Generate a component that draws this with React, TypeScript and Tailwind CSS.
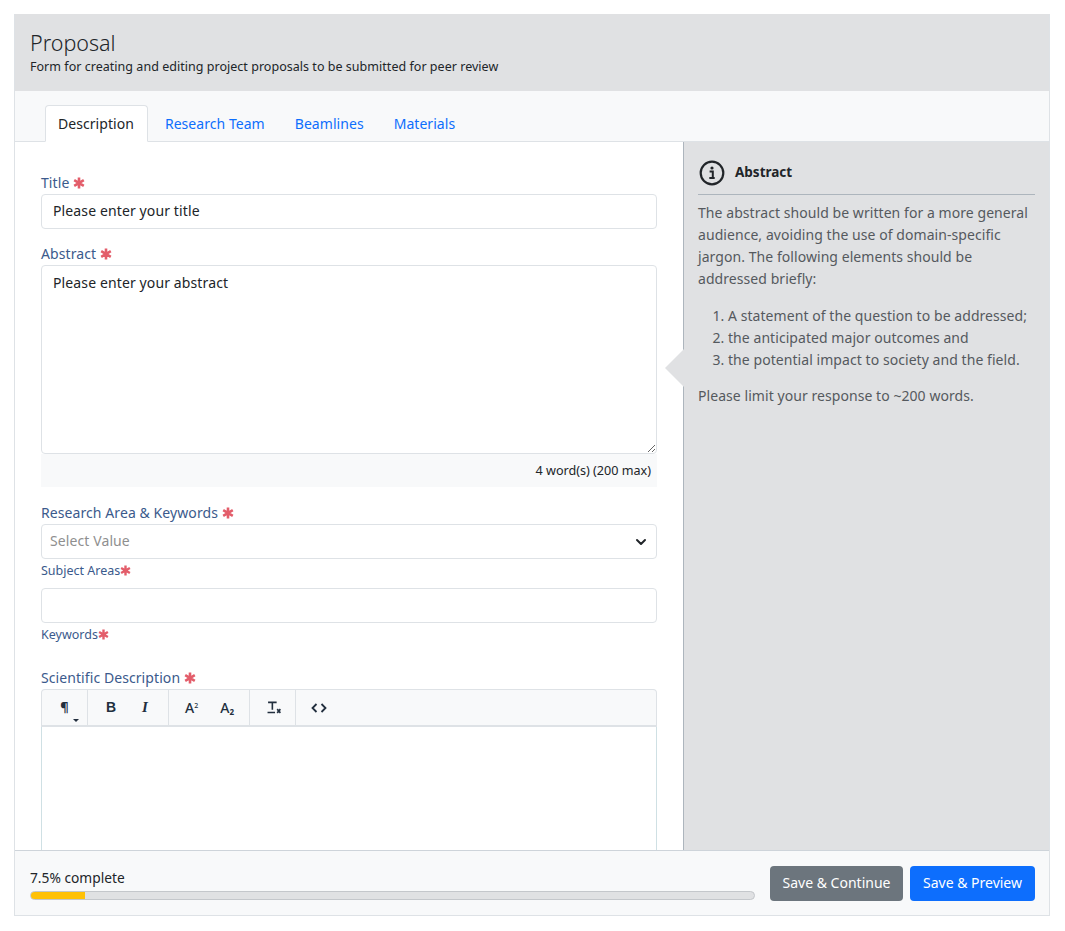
import { ChevronDown } from 'lucide-react';

const tabs = ['Research Team', 'Beamlines', 'Materials'];

function Star({ small }: { small?: boolean }) {
  return (
    <svg viewBox="0 0 12 12" className={small ? 'inline-block w-[11px] h-[11px] align-[-0.5px]' : 'inline-block w-[12px] h-[12px] ml-[4px] align-[-0.5px]'}>
      <path d="M6 0.5v11M1.2 3.2l9.6 5.6M10.8 3.2l-9.6 5.6" stroke="#e35d6a" strokeWidth="2.6" fill="none" />
    </svg>
  );
}

function FieldLabel({ text }: { text: string }) {
  return (
    <div className="text-[14px] leading-[21px] tracking-[0.08px] text-[#3b5a8c]">
      {text}
      <Star />
    </div>
  );
}

function SubLabel({ text }: { text: string }) {
  return (
    <div className="text-[12.5px] leading-[18px] text-[#3b5a8c] mt-[3px]">
      {text}
      <Star small />
    </div>
  );
}

function ToolbarButton({ children, w }: { children: React.ReactNode; w: string }) {
  return <div className={`flex items-center justify-center h-[35px] ${w}`}>{children}</div>;
}

export default function App() {
  return (
    <div className="h-[931px] pl-[14px] pr-[15px] py-[14px] bg-white text-[14px] text-[#212529] overflow-hidden font-['Noto_Sans',sans-serif]">
      <div className="h-[902px] flex flex-col border border-[#dee2e6] border-t-0 overflow-hidden">
        {/* Header */}
        <div className="h-[77px] shrink-0 bg-[#e0e1e3] px-[15px] pt-[14px]">
          <div className="text-[21.5px] leading-[29px] font-light text-[#212529]">Proposal</div>
          <div className="text-[12.5px] leading-[19px] tracking-[0.03px] text-[#212529]">
            Form for creating and editing project proposals to be submitted for peer review
          </div>
        </div>

        {/* Tabs */}
        <div className="h-[51px] shrink-0 bg-[#f8f9fa] border-b border-[#dee2e6] pl-[30px] pt-[14px] flex items-end">
          <div className="h-[37px] -mb-px mr-[2px] pl-[12px] pr-[13px] tracking-[0.05px] bg-white border border-[#dee2e6] border-b-white rounded-t-[4px] flex items-center">
            Description
          </div>
          {tabs.map((tab) => (
            <div key={tab} className="h-[36px] px-[15px] flex items-center tracking-[0.05px] text-[#0d6efd]">
              {tab}
            </div>
          ))}
        </div>

        {/* Body */}
        <div className="flex-1 min-h-0 flex">
          <div className="w-[668px] shrink-0 pl-[26px] pr-[26px] pt-[30px] overflow-hidden">
            <FieldLabel text="Title" />
            <div className="h-[35px] mt-[1px] pb-[2px] border border-[#dee2e6] rounded-[4px] px-[11px] tracking-[0.12px] flex items-center">
              Please enter your title
            </div>

            <div className="mt-[14px]">
              <FieldLabel text="Abstract" />
            </div>
            <textarea
              readOnly
              defaultValue="Please enter your abstract"
              className="block w-full h-[189px] mt-[1px] border border-[#dee2e6] rounded-[4px] px-[11px] py-[6px] leading-[21px] tracking-[0.12px] outline-none resize-y"
            />
            <div className="h-[33px] pt-[1px] bg-[#f8f9fa] flex items-center justify-end pr-[6px] text-[12.6px]">
              4 word(s) (200 max)
            </div>

            <div className="mt-[15px]">
              <FieldLabel text="Research Area & Keywords" />
            </div>
            <div className="h-[35px] mt-[1px] border border-[#dee2e6] rounded-[4px] pl-[8px] pr-[7px] flex items-center justify-between text-[#8f8f8f]">
              <span className="pb-[2px] tracking-[0.1px]">Select Value</span>
              <ChevronDown className="w-[16px] h-[16px] text-[#212529]" strokeWidth={3} />
            </div>
            <SubLabel text="Subject Areas" />

            <div className="h-[35px] mt-[8px] border border-[#dee2e6] rounded-[4px]" />
            <SubLabel text="Keywords" />

            <div className="mt-[23px]">
              <FieldLabel text="Scientific Description" />
            </div>
            <div className="mt-[1px] border border-[#dee2e6] rounded-t-[4px] bg-[#f8f9fa] border-b-2 flex h-[38px] text-[#222f3e]">
              <ToolbarButton w="w-[46px] border-r border-[#dee2e6] relative">
                <span className="text-[13px] font-bold">¶</span>
                <svg viewBox="0 0 6 3" className="absolute left-[31px] bottom-[3px] w-[6px] h-[3px]">
                  <path d="M0 0h6L3 3z" fill="#222f3e" />
                </svg>
              </ToolbarButton>
              <ToolbarButton w="w-[81px] border-r border-[#dee2e6] gap-[26px]">
                <span className="font-['Liberation_Sans',sans-serif] text-[14px] font-bold w-[10px]">B</span>
                <span className="font-['Liberation_Serif',serif] text-[15px] font-bold italic w-[8px]">I</span>
              </ToolbarButton>
              <ToolbarButton w="w-[81px] border-r border-[#dee2e6] gap-[22px] pl-[1px]">
                <span className="text-[14px] font-medium">
                  A<sup className="text-[7px] -top-[5px]">2</sup>
                </span>
                <span className="text-[14px] font-medium">
                  A<sub className="text-[8px] -bottom-[2px] font-bold">2</sub>
                </span>
              </ToolbarButton>
              <ToolbarButton w="w-[46px] border-r border-[#dee2e6] pl-[3px]">
                <svg viewBox="0 0 14 12" className="w-[15px] h-[13px]">
                  <path d="M1 1.2h8M5 1.2v7M0.5 10.6h7" stroke="#222f3e" strokeWidth="1.5" fill="none" />
                  <path d="M9.5 7.5l3 3.5M12.5 7.5l-3 3.5" stroke="#222f3e" strokeWidth="1.5" fill="none" />
                </svg>
              </ToolbarButton>
              <ToolbarButton w="w-[45px]">
                <svg viewBox="0 0 16 10" className="w-[16px] h-[10px]">
                  <path d="M5.5 1L1.5 5l4 4M10.5 1l4 4-4 4" stroke="#222f3e" strokeWidth="1.8" fill="none" />
                </svg>
              </ToolbarButton>
            </div>
            <div className="h-[200px] border-x border-[#cfe0e4]" />
          </div>

          {/* Help panel */}
          <div className="relative flex-1 bg-[#e0e1e3] border-l border-[#adb5bd] px-[14px] pt-[16px] tracking-[0.06px] text-[#55595e]">
            <div className="absolute -left-[19px] top-[207px] w-0 h-0 border-y-[19px] border-y-transparent border-r-[19px] border-r-[#e0e1e3]" />
            <div className="flex items-center gap-[10px] h-[27px] text-[#212529]">
              <svg viewBox="0 0 26 26" className="w-[26px] h-[26px] ml-[1px] mt-[2px]">
                <circle cx="13" cy="13" r="11.3" stroke="#212529" strokeWidth="2.2" fill="none" />
                <circle cx="13" cy="8" r="1.6" fill="#212529" />
                <path d="M10.6 11.5h3.2v6.2M10.3 18h5.4" stroke="#212529" strokeWidth="2" fill="none" />
              </svg>
              <span className="font-bold text-[13.5px] tracking-normal pt-[2px]">Abstract</span>
            </div>
            <div className="mt-[9px] pt-[7px] border-t border-[#adb5bd] leading-[22px]">
              <p>The abstract should be written for a more general audience, avoiding the use of domain-specific jargon. The following elements should be addressed briefly:</p>
              <ol className="list-decimal pl-[30px] mt-[15px]">
                <li>A statement of the question to be addressed;</li>
                <li>the anticipated major outcomes and</li>
                <li>the potential impact to society and the field.</li>
              </ol>
              <p className="mt-[14px]">Please limit your response to ~200 words.</p>
            </div>
          </div>
        </div>

        {/* Footer */}
        <div className="h-[65px] shrink-0 bg-[#f8f9fa] border-t border-[#ced4da] pl-[15px] pr-[14px] flex items-center gap-[15px]">
          <div className="flex-1 pt-[2px]">
            <div className="leading-[20px] text-[13.75px]">7.5% complete</div>
            <div className="mt-[3px] h-[9px] rounded-full bg-[#e0e1e3] border border-[#c4c7cb] overflow-hidden">
              <div className="h-full w-[7.5%] bg-[#ffc107]" />
            </div>
          </div>
          <button className="h-[35px] w-[133px] pb-[1px] rounded-[4px] bg-[#6c757d] text-white">Save &amp; Continue</button>
          <button className="h-[35px] w-[125px] pb-[1px] -ml-[8px] rounded-[4px] bg-[#0d6efd] text-white">Save &amp; Preview</button>
        </div>
      </div>
    </div>
  );
}
